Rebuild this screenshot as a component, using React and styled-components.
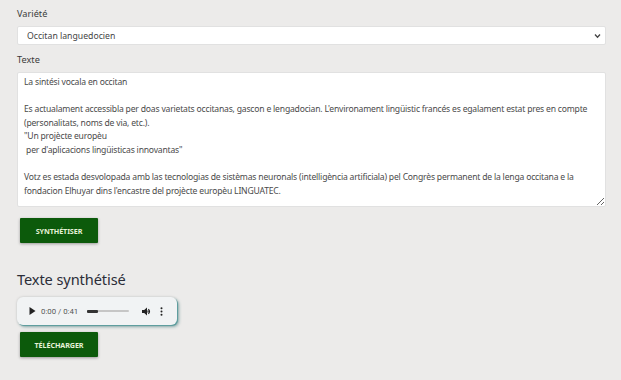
import React from 'react';
import styled, { createGlobalStyle } from 'styled-components';

const GlobalStyle = createGlobalStyle`
  html, body {
    margin: 0;
    padding: 0;
    background: #ecebea;
  }
  body {
    font-family: "Noto Sans", "Open Sans", sans-serif;
    color: #333;
  }
`

const StyledPage = styled.div`
  width: 621px;
  height: 380px;
  box-sizing: border-box;
  padding: 7px 15px 0 17px;
  display: flex;
  flex-direction: column;
  overflow: hidden;
`

const StyledLabel = styled.label`
  display: block;
  font-size: 9.2px;
  color: #3b3b3b;
  line-height: 14px;
  margin-bottom: 5px;
`

const StyledSelectWrap = styled.div`
  position: relative;
  margin-bottom: 8px;
`

const StyledSelect = styled.select`
  display: block;
  width: 100%;
  height: 19px;
  box-sizing: border-box;
  border: 1px solid #e1e1e1;
  border-radius: 2px;
  background: #fff;
  appearance: none;
  font-family: inherit;
  font-size: 8.7px;
  color: #444;
  padding: 0 0 0 9px;
  outline: none;
`

const StyledChevron = styled.svg`
  position: absolute;
  right: 5px;
  top: 7px;
  width: 7px;
  height: 6px;
  pointer-events: none;
`

const StyledTextarea = styled.textarea`
  width: 100%;
  height: 135px;
  box-sizing: border-box;
  border: 1px solid #e1e1e1;
  border-radius: 2px;
  background: #fff;
  font-family: inherit;
  font-size: 8.6px;
  letter-spacing: -0.2px;
  line-height: 13.6px;
  color: #4a4a4a;
  padding: 3px 3px 3px 6px;
  resize: vertical;
  outline: none;
  display: block;
  overflow: hidden;
`

const StyledButton = styled.button`
  width: 78px;
  height: 25px;
  margin-left: 3px;
  border: none;
  border-radius: 1px;
  background: #0c5a0b;
  color: #e6f2d8;
  font-family: inherit;
  font-size: 7.2px;
  font-weight: 700;
  letter-spacing: -0.1px;
  box-shadow: 0 1px 3px rgba(0, 0, 0, 0.35);
  margin-top: ${p => p.top}px;
`

const StyledHeading = styled.h2`
  margin: 25px 0 0;
  font-size: 14.6px;
  letter-spacing: -0.1px;
  font-weight: 400;
  color: #2b2d38;
  line-height: 22px;
`

const StyledPlayer = styled.div`
  width: 160px;
  height: 28px;
  margin-top: 7px;
  box-sizing: border-box;
  border-radius: 6px;
  background: #f1f3f4;
  box-shadow: 1px 1px 0 #5f9e9f, 2px 2px 3px rgba(40, 110, 110, 0.5), 0 0 3px rgba(0, 0, 0, 0.15);
  display: flex;
  align-items: center;
  padding: 0 10px 0 12px;
`

const StyledTime = styled.span`
  font-family: Roboto, "Liberation Sans", sans-serif;
  font-size: 7.8px;
  color: #555;
  margin-left: 5px;
  white-space: nowrap;
`

const StyledTrack = styled.div`
  width: 42px;
  height: 2px;
  margin-left: 9px;
  background: #c6c6c6;
  border-radius: 1px;
  position: relative;
  & > div {
    position: absolute;
    left: 0;
    top: -0.5px;
    height: 3px;
    border-radius: 1px;
    background: #333;
  }
`

const StyledIcon = styled.svg`
  flex: none;
  margin-left: ${p => p.ml || 0}px;
`

const Chevron = () => (
  <StyledChevron viewBox="0 0 7 6">
    <path d="M1 1.5 L3.5 4.2 L6 1.5" stroke="#444" strokeWidth="1.3" fill="none" />
  </StyledChevron>
)

const AudioPlayer = ({ current, total, progress }) => (
  <StyledPlayer>
    <StyledIcon width="7" height="8" viewBox="0 0 7 8">
      <path d="M0.5 0 L6.5 4 L0.5 8 Z" fill="#222" />
    </StyledIcon>
    <StyledTime>{current} / {total}</StyledTime>
    <StyledTrack>
      <div style={{ width: `${progress}%` }} />
    </StyledTrack>
    <StyledIcon ml={13} width="10" height="9" viewBox="0 0 10 9">
      <path d="M0 3 H2.2 L5 0.5 V8.5 L2.2 6 H0 Z" fill="#222" />
      <path d="M6.3 2.3 A2.6 2.6 0 0 1 6.3 6.7" stroke="#222" strokeWidth="1.2" fill="none" />
      <path d="M5.6 3.6 A1 1 0 0 1 5.6 5.4" stroke="#222" strokeWidth="1.2" fill="none" />
    </StyledIcon>
    <StyledIcon ml={8} width="3" height="9" viewBox="0 0 3 9">
      <circle cx="1.5" cy="1.2" r="1" fill="#222" />
      <circle cx="1.5" cy="4.5" r="1" fill="#222" />
      <circle cx="1.5" cy="7.8" r="1" fill="#222" />
    </StyledIcon>
  </StyledPlayer>
)

const text = `La sintési vocala en occitan

Es actualament accessibla per doas varietats occitanas, gascon e lengadocian. L'environament lingüistic francés es egalament estat pres en compte (personalitats, noms de via, etc.).
"Un projècte europèu
 per d'aplicacions lingüisticas innovantas"

Votz es estada desvolopada amb las tecnologias de sistèmas neuronals (intelligència artificiala) pel Congrès permanent de la lenga occitana e la fondacion Elhuyar dins l'encastre del projècte europèu LINGUATEC.`

const App = () => {
  return (
    <>
      <GlobalStyle />
      <StyledPage>
        <StyledLabel>Variété</StyledLabel>
        <StyledSelectWrap>
          <StyledSelect defaultValue="lengadocian">
            <option value="lengadocian">Occitan languedocien</option>
            <option value="gascon">Occitan gascon</option>
          </StyledSelect>
          <Chevron />
        </StyledSelectWrap>
        <StyledLabel>Texte</StyledLabel>
        <StyledTextarea defaultValue={text} spellCheck={false} />
        <StyledButton top={11}>SYNTHÉTISER</StyledButton>
        <StyledHeading>Texte synthétisé</StyledHeading>
        <AudioPlayer current="0:00" total="0:41" progress={25} />
        <StyledButton top={7}>TÉLÉCHARGER</StyledButton>
      </StyledPage>
    </>
  );
}

export default App;
